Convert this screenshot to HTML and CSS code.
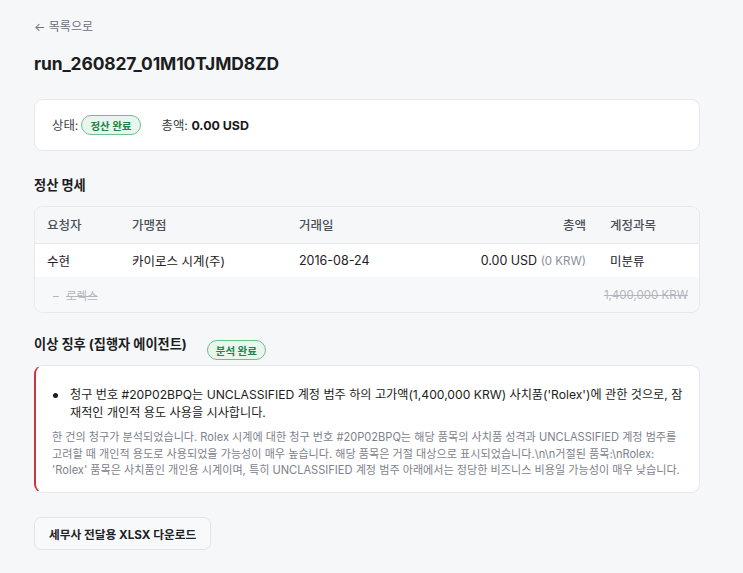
FILE: index.html
```html
<!DOCTYPE html>
<html lang="ko">
<head>
<meta charset="utf-8">
<title>run_260827_01M10TJMD8ZD</title>
<link rel="stylesheet" href="styles.css">
</head>
<body>
<main class="page">
  <a class="back" href="#">← 목록으로</a>
  <h1 class="title">run_260827_01M10TJMD8ZD</h1>

  <section class="card summary">
    <span class="label">상태:</span>
    <span class="badge">정산 완료</span>
    <span class="label total">총액: <strong>0.00 USD</strong></span>
  </section>

  <h2 class="section-title">정산 명세</h2>
  <div class="card table-card">
    <table class="items">
      <thead>
        <tr>
          <th class="c-req">요청자</th>
          <th class="c-merch">가맹점</th>
          <th class="c-date">거래일</th>
          <th class="c-amt">총액</th>
          <th class="c-acct">계정과목</th>
        </tr>
      </thead>
      <tbody>
        <tr class="main-row">
          <td>수현</td>
          <td>카이로스 시계(주)</td>
          <td>2016-08-24</td>
          <td class="c-amt">0.00 USD <span class="muted">(0 KRW)</span></td>
          <td>미분류</td>
        </tr>
        <tr class="sub-row">
          <td colspan="3"><span class="dash">–</span> <s>로렉스</s></td>
          <td colspan="2" class="sub-amt"><s>1,400,000 KRW</s></td>
        </tr>
      </tbody>
    </table>
  </div>

  <div class="anomaly-head">
    <h2 class="section-title">이상 징후 (집행자 에이전트)</h2>
    <span class="badge badge-low">분석 완료</span>
  </div>
  <section class="card alert">
    <ul class="findings">
      <li>청구 번호 #20P02BPQ는 UNCLASSIFIED 계정 범주 하의 고가액(1,400,000 KRW) 사치품('Rolex')에 관한 것으로, 잠재적인 개인적 용도 사용을 시사합니다.</li>
    </ul>
    <p class="detail">한 건의 청구가 분석되었습니다. Rolex 시계에 대한 청구 번호 #20P02BPQ는 해당 품목의 사치품 성격과 UNCLASSIFIED 계정 범주를 고려할 때 개인적 용도로 사용되었을 가능성이 매우 높습니다. 해당 품목은 거절 대상으로 표시되었습니다.\n\n거절된 품목:\nRolex: 'Rolex' 품목은 사치품인 개인용 시계이며, 특히 UNCLASSIFIED 계정 범주 아래에서는 정당한 비즈니스 비용일 가능성이 매우 낮습니다.</p>
  </section>

  <button class="download" type="button">세무사 전달용 XLSX 다운로드</button>
</main>
</body>
</html>
```

FILE: styles.css
```css
* { box-sizing: border-box; }
html, body { margin: 0; padding: 0; }
body {
  background: #f6f7f9;
  color: #1b1d21;
  font-family: Inter, "Noto Sans CJK KR", sans-serif;
  font-size: 13px;
}
.page {
  padding: 18px 43px 24px 34px;
  display: flex;
  flex-direction: column;
}
.back {
  color: #6b7079;
  text-decoration: none;
  font-size: 12px;
  line-height: 18px;
  align-self: flex-start;
}
.title {
  margin: 16px 0 0;
  font-size: 17.4px;
  font-weight: 700;
  line-height: 24px;
  letter-spacing: -0.1px;
}
.card {
  background: #fff;
  border: 1px solid #e6e8ec;
  border-radius: 9px;
}
.summary {
  margin-top: 23px;
  height: 52px;
  display: flex;
  align-items: center;
  padding: 0 17px;
  gap: 3px;
  font-size: 12.4px;
}
.summary .label { color: #3a3e45; }
.summary .total { margin-left: 18px; }
.summary strong { color: #16181c; font-weight: 700; }
.badge {
  display: inline-flex;
  align-items: center;
  height: 20px;
  padding: 0 8px;
  border: 1px solid #6cc08a;
  background: #e8f6ed;
  color: #23824a;
  border-radius: 10px;
  font-size: 10.5px;
  font-weight: 700;
}
.section-title {
  margin: 24px 0 0;
  font-size: 13.2px;
  font-weight: 700;
  line-height: 20px;
}
.table-card {
  margin-top: 11px;
  overflow: hidden;
}
.items {
  width: 100%;
  border-collapse: collapse;
  table-layout: fixed;
  font-size: 12.5px;
}
.items th {
  text-align: left;
  font-weight: 500;
  color: #4b5058;
  background: #f6f7f9;
  height: 36px;
  border-bottom: 1px solid #e6e8ec;
  padding: 0 0 0 12px;
}
.items td {
  height: 34px;
  padding: 0 0 0 12px;
  color: #1d2025;
  white-space: nowrap;
}
.items .c-req { width: 85px; }
.items .c-merch { width: 167px; }
.items .c-date { width: 130px; }
.items th.c-amt, .items td.c-amt { text-align: right; padding-right: 12px; }
.items .c-acct { width: 101px; }
.muted { color: #8a8f98; font-size: 11.5px; }
.sub-row td {
  background: #f7f8fa;
  color: #b2b6bd;
  font-size: 11.5px;
  height: 35px;
}
.sub-row .dash { margin-left: 6px; margin-right: 4px; }
.sub-row td.sub-amt { text-align: right; padding: 0 11px 0 0; }
.anomaly-head {
  display: flex;
  align-items: flex-end;
  gap: 20px;
  margin-top: 21px;
}
.anomaly-head .section-title { margin: 0; }
.badge-low { position: relative; top: 6px; }
.alert {
  margin-top: 11px;
  border-left: 2px solid #d0343e;
  border-radius: 9px;
  padding: 20px 8px 13px 16px;
}
.findings {
  margin: 0;
  padding: 0;
  list-style: none;
  font-size: 12.15px;
  line-height: 18px;
  color: #1b1d21;
}
.findings li {
  position: relative;
  padding-left: 18px;
}
.findings li::before {
  content: "";
  position: absolute;
  left: 1px;
  top: 7px;
  width: 5px;
  height: 5px;
  border-radius: 50%;
  background: #1b1d21;
}
.detail {
  margin: 7px 0 0;
  padding-right: 11px;
  font-size: 11.1px;
  line-height: 16.5px;
  color: #7d828b;
}
.download {
  align-self: flex-start;
  margin-top: 24px;
  height: 33px;
  padding: 0 14px;
  background: #f8f9fb;
  border: 1px solid #e2e4e8;
  border-radius: 7px;
  font-family: inherit;
  font-size: 11.7px;
  font-weight: 700;
  color: #1f2227;
}
```
